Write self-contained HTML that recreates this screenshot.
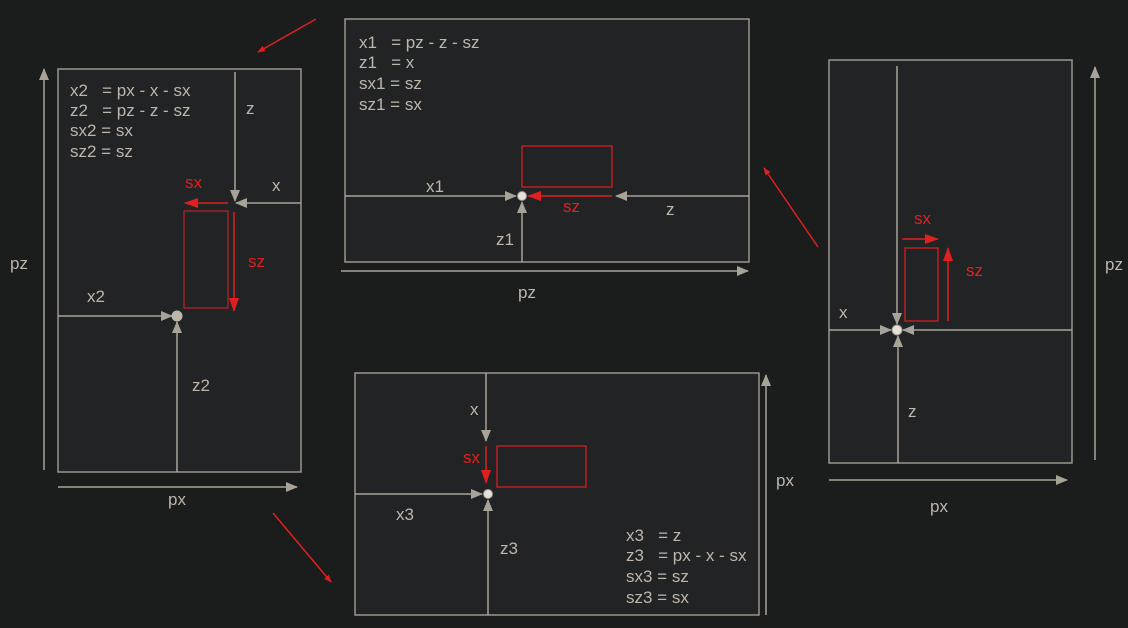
<!DOCTYPE html>
<html><head><style>html,body{margin:0;padding:0;background:#1b1c1c;}svg{display:block}text{font-family:"Liberation Sans",sans-serif;font-size:17px;fill:#bdb6ab;white-space:pre}.r{fill:#e02020}</style></head><body>
<svg width="1128" height="628" viewBox="0 0 1128 628" xmlns="http://www.w3.org/2000/svg" xml:space="preserve">
<defs>
<marker id="g" markerWidth="12" markerHeight="10" refX="11" refY="5" orient="auto" markerUnits="userSpaceOnUse"><path d="M0,0 L12,5 L0,10z" fill="#a8a398"/></marker>
<marker id="rr" markerWidth="14" markerHeight="10" refX="13" refY="5" orient="auto" markerUnits="userSpaceOnUse"><path d="M0,0 L14,5 L0,10z" fill="#e02020"/></marker>
<marker id="rs" markerWidth="8" markerHeight="6" refX="7" refY="3" orient="auto" markerUnits="userSpaceOnUse"><path d="M0,0 L8,3 L0,6z" fill="#e02020"/></marker>
</defs>
<g stroke="#9a958d" stroke-width="1.5" fill="#222325">
<rect x="58" y="69" width="243" height="403"/>
<rect x="345" y="19" width="404" height="243"/>
<rect x="829" y="60" width="243" height="403"/>
<rect x="355" y="373" width="404" height="242"/>
</g>
<g stroke="#a8a398" stroke-width="1.5" fill="none">
<line x1="44" y1="470" x2="44" y2="69" marker-end="url(#g)"/>
<line x1="58" y1="487" x2="297" y2="487" marker-end="url(#g)"/>
<line x1="341" y1="271" x2="748" y2="271" marker-end="url(#g)"/>
<line x1="1095" y1="460" x2="1095" y2="67" marker-end="url(#g)"/>
<line x1="829" y1="480" x2="1067" y2="480" marker-end="url(#g)"/>
<line x1="766" y1="615" x2="766" y2="375" marker-end="url(#g)"/>
<line x1="235" y1="72" x2="235" y2="201" marker-end="url(#g)"/>
<line x1="301" y1="203" x2="236" y2="203" marker-end="url(#g)"/>
<line x1="58" y1="316" x2="172" y2="316" marker-end="url(#g)"/>
<line x1="177" y1="472" x2="177" y2="322" marker-end="url(#g)"/>
<line x1="345" y1="196" x2="516" y2="196" marker-end="url(#g)"/>
<line x1="749" y1="196" x2="616" y2="196" marker-end="url(#g)"/>
<line x1="522" y1="262" x2="522" y2="202" marker-end="url(#g)"/>
<line x1="897" y1="66" x2="897" y2="324" marker-end="url(#g)"/>
<line x1="829" y1="330" x2="891" y2="330" marker-end="url(#g)"/>
<line x1="1072" y1="330" x2="903" y2="330" marker-end="url(#g)"/>
<line x1="898" y1="463" x2="898" y2="336" marker-end="url(#g)"/>
<line x1="486" y1="373" x2="486" y2="441" marker-end="url(#g)"/>
<line x1="355" y1="494" x2="482" y2="494" marker-end="url(#g)"/>
<line x1="488" y1="615" x2="488" y2="500" marker-end="url(#g)"/>
</g>
<circle cx="177" cy="316" r="5.5" fill="#bdb6ab"/>
<g fill="#e5e0d8" stroke="#9a958d">
<circle cx="522" cy="196" r="4.5"/>
<circle cx="897" cy="330" r="5"/>
<circle cx="488" cy="494" r="4.5"/>
</g>
<g stroke="#d42020" stroke-width="1.3" fill="none">
<rect x="184" y="211" width="44" height="97" stroke="#b02222"/>
<rect x="522" y="146" width="90" height="41"/>
<rect x="905" y="248" width="33" height="73"/>
<rect x="497" y="446" width="89" height="41"/>
</g>
<g stroke="#e02020" stroke-width="1.5" fill="none">
<line x1="228" y1="203" x2="185" y2="203" marker-end="url(#rr)"/>
<line x1="234" y1="212" x2="234" y2="311" marker-end="url(#rr)"/>
<line x1="612" y1="196" x2="528" y2="196" marker-end="url(#rr)"/>
<line x1="902" y1="239" x2="938" y2="239" marker-end="url(#rr)"/>
<line x1="948" y1="321" x2="948" y2="248" marker-end="url(#rr)"/>
<line x1="486" y1="446" x2="486" y2="483" marker-end="url(#rr)"/>
<line x1="316" y1="19" x2="258" y2="52" marker-end="url(#rs)"/>
<line x1="818" y1="247" x2="764" y2="168" marker-end="url(#rs)"/>
<line x1="273" y1="513" x2="331" y2="582" marker-end="url(#rs)"/>
</g>
<text x="70" y="96">x2   = px - x - sx</text>
<text x="70" y="116">z2   = pz - z - sz</text>
<text x="70" y="136">sx2 = sx</text>
<text x="70" y="157">sz2 = sz</text>
<text x="246" y="114">z</text>
<text x="272" y="191">x</text>
<text x="87" y="302">x2</text>
<text x="192" y="391">z2</text>
<text x="10" y="269">pz</text>
<text x="168" y="505">px</text>
<text class="r" x="185" y="188">sx</text>
<text class="r" x="248" y="267">sz</text>

<text x="359" y="48">x1   = pz - z - sz</text>
<text x="359" y="68">z1   = x</text>
<text x="359" y="89">sx1 = sz</text>
<text x="359" y="110">sz1 = sx</text>
<text x="426" y="192">x1</text>
<text x="666" y="215">z</text>
<text x="496" y="245">z1</text>
<text x="518" y="298">pz</text>
<text class="r" x="563" y="212">sz</text>

<text x="839" y="318">x</text>
<text x="908" y="417">z</text>
<text x="1105" y="270">pz</text>
<text x="930" y="512">px</text>
<text class="r" x="914" y="224">sx</text>
<text class="r" x="966" y="276">sz</text>

<text x="470" y="415">x</text>
<text x="396" y="520">x3</text>
<text x="500" y="554">z3</text>
<text x="776" y="486">px</text>
<text class="r" x="463" y="463">sx</text>
<text x="626" y="541">x3   = z</text>
<text x="626" y="561">z3   = px - x - sx</text>
<text x="626" y="582">sx3 = sz</text>
<text x="626" y="603">sz3 = sx</text>
</svg>
</body></html>
